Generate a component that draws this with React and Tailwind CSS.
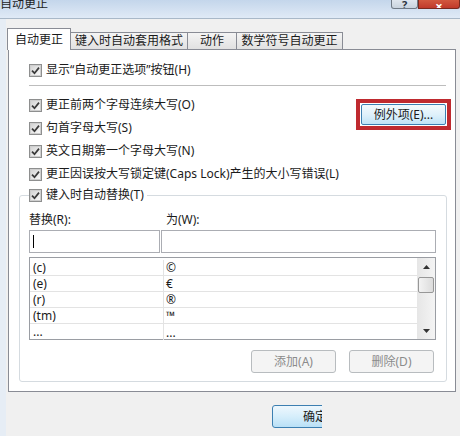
import React from 'react';

const rows = [
  ['(c)', '©'],
  ['(e)', '€'],
  ['(r)', '®'],
  ['(tm)', '™'],
  ['...', '...'],
];

function Checkbox() {
  return (
    <span className="flex h-[13px] w-[13px] shrink-0 items-center justify-center border border-[#8e8f8f] bg-white">
      <span className="flex h-[11px] w-[11px] items-center justify-center border border-[#cfcfcf] bg-linear-to-br from-[#d4d4d4] to-[#f9f9f9]">
        <svg width="9" height="9" viewBox="0 0 9 9">
          <path d="M1 4.6 L3.5 7.2 L8 1.6" fill="none" stroke="#3a3a3a" strokeWidth="1.7" />
        </svg>
      </span>
    </span>
  );
}

function CheckRow({ label }) {
  return (
    <div className="flex h-[16px] items-center gap-[4px] whitespace-nowrap">
      <Checkbox />
      <span>{label}</span>
    </div>
  );
}

export default function App() {
  return (
    <div className="h-[436px] w-[460px] overflow-hidden bg-[#f0f0f0] font-['Noto_Sans','Noto_Sans_CJK_SC',sans-serif] text-[12px] leading-[16px] text-[#1b1b1b]">
      {/* 标题栏 */}
      <div className="flex h-[19px] items-start justify-between border-b border-[#a9b8c8] bg-linear-to-b from-[#c4d6eb] to-[#e0eaf6]">
        <span className="-mt-[4px] text-[12px] text-[#1e1e1e]">自动更正</span>
        <div className="flex">
          <div className="flex h-[9px] w-[27px] items-end justify-center overflow-hidden rounded-b-[3px] border border-t-0 border-[#707a86] bg-linear-to-b from-[#dfe6ee] to-[#c9d3de]">
            <span className="-mb-[3px] text-[11px] font-bold leading-[12px] text-[#2c3440]">?</span>
          </div>
          <div className="flex h-[9px] w-[42px] items-end justify-center overflow-hidden rounded-br-[3px] border border-t-0 border-[#7a2a20] bg-linear-to-b from-[#d2583f] to-[#c0392b]">
            <span className="-mb-[4px] text-[13px] font-bold leading-[12px] text-white">×</span>
          </div>
        </div>
      </div>

      <div className="h-[417px] border-l-[6px] border-[#e6edf5] pl-[2px]">
        {/* 选项卡 */}
        <div className="flex h-[30px] items-end pt-[9px]">
          <div className="relative z-10 -mb-[1px] -ml-[1px] flex h-[22px] w-[64px] items-center justify-center border border-b-0 border-[#898c95] bg-white">
            自动更正
          </div>
          <div className="-ml-[1px] flex h-[17px] w-[118px] items-center justify-center border border-b-0 border-[#898c95] bg-linear-to-b from-[#f4f4f4] to-[#e1e1e1]">
            键入时自动套用格式
          </div>
          <div className="-ml-[1px] flex h-[17px] w-[50px] items-center justify-center border border-b-0 border-[#898c95] bg-linear-to-b from-[#f4f4f4] to-[#e1e1e1]">
            动作
          </div>
          <div className="-ml-[1px] flex h-[17px] w-[107px] items-center justify-center border border-b-0 border-[#898c95] bg-linear-to-b from-[#f4f4f4] to-[#e1e1e1]">
            数学符号自动更正
          </div>
        </div>

        {/* 选项卡内容 */}
        <div className="w-[448px] border border-[#898c95] bg-white pt-[12px] pr-[8px] pb-[9px] pl-[20px]">
          <CheckRow label="显示“自动更正选项”按钮(H)" />
          <div className="mt-[7px] mr-[1px] h-px bg-[#bdbdbd]" />

          <div className="mt-[11px] flex items-start justify-between">
            <div className="flex flex-col gap-[7px]">
              <CheckRow label="更正前两个字母连续大写(O)" />
              <CheckRow label="句首字母大写(S)" />
              <CheckRow label="英文日期第一个字母大写(N)" />
              <CheckRow label="更正因误按大写锁定键(Caps Lock)产生的大小写错误(L)" />
            </div>
            <div className="-mr-[4px] mt-[2px] border-[4px] border-[#bf2a2f] p-[1px]">
              <div className="flex h-[21px] w-[85px] items-center justify-center rounded-[2px] border border-[#3c7fb1] bg-linear-to-b from-[#f3f9fd] via-[#dff1fb] to-[#bfe3f7]">
                例外项(E)...
              </div>
            </div>
          </div>

          {/* 键入时自动替换 */}
          <fieldset className="-ml-[10px] mt-[5px] rounded-[3px] border border-[#d5dbe0] pt-[9px] pr-[10px] pb-[8px] pl-[9px]">
            <legend className="pr-[3px]">
              <CheckRow label="键入时自动替换(T)" />
            </legend>
            <div className="flex h-[16px]">
              <span className="w-[137px]">替换(R):</span>
              <span>为(W):</span>
            </div>
            <div className="mt-[2px] flex gap-[1px]">
              <div className="flex h-[23px] w-[131px] items-center border border-[#abadb3] pl-[3px]">
                <span className="h-[13px] w-px bg-black" />
              </div>
              <div className="h-[23px] flex-1 border border-[#abadb3]" />
            </div>

            {/* 列表 */}
            <div className="mt-[4px] flex h-[83px] border border-[#9a9da3]">
              <div className="flex-1 pt-[2px]">
                {rows.map((r, i) => (
                  <div
                    key={i}
                    className={`flex h-[16px] items-center ${i < rows.length - 1 ? 'border-b border-[#e3e3e3]' : ''}`}
                  >
                    <span className="h-full w-[134px] border-r border-[#e3e3e3] pl-[3px] leading-[15px]">{r[0]}</span>
                    <span className="pl-[2px] leading-[15px]">{r[1]}</span>
                  </div>
                ))}
              </div>
              <div className="flex w-[18px] flex-col bg-linear-to-r from-[#e6e6e6] to-[#f4f4f4]">
                <div className="flex h-[17px] items-center justify-center">
                  <svg width="7" height="4" viewBox="0 0 7 4"><path d="M0 4 L3.5 0 L7 4 Z" fill="#333" /></svg>
                </div>
                <div className="mx-[1px] mt-[2px] h-[16px] rounded-[2px] border border-[#979797] bg-linear-to-r from-[#f3f3f3] to-[#dcdcdc]" />
                <div className="flex-1" />
                <div className="flex h-[17px] items-center justify-center">
                  <svg width="7" height="4" viewBox="0 0 7 4"><path d="M0 0 L7 0 L3.5 4 Z" fill="#333" /></svg>
                </div>
              </div>
            </div>

            <div className="mt-[10px] flex justify-end gap-[13px] pr-[2px]">
              <div className="flex h-[23px] w-[85px] items-center justify-center rounded-[3px] border border-[#b8bcbf] bg-[#f4f4f4] text-[#8b8b8b]">
                添加(A)
              </div>
              <div className="flex h-[23px] w-[85px] items-center justify-center rounded-[3px] border border-[#b8bcbf] bg-[#f4f4f4] text-[#8b8b8b]">
                删除(D)
              </div>
            </div>
          </fieldset>
        </div>

        {/* 确定按钮（被截断） */}
        <div className="ml-[264px] mt-[13px] h-[23px] w-[50px] overflow-hidden">
          <div className="flex h-[23px] w-[86px] items-center justify-center rounded-[3px] border border-[#3c7fb1] bg-linear-to-b from-[#eef7fd] via-[#d6eefb] to-[#b9e0f6]">
            确定
          </div>
        </div>
      </div>
    </div>
  );
}
